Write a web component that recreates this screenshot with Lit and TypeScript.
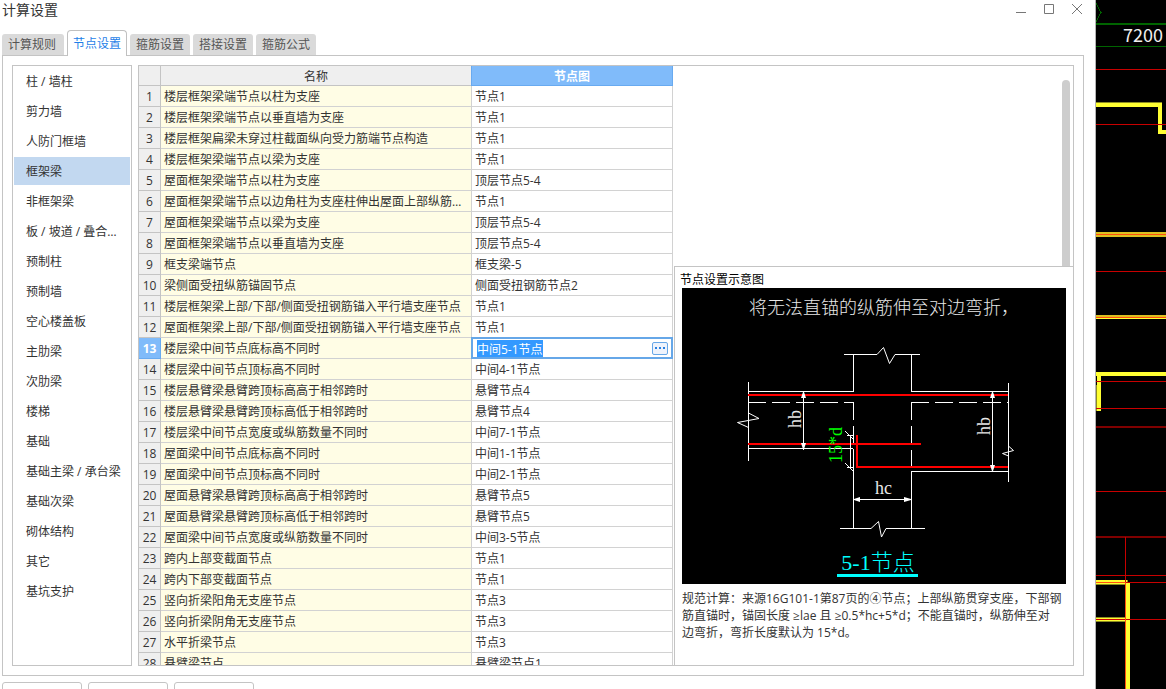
import { LitElement, html, css, svg } from "lit";
import { customElement, state, query } from "lit/decorators.js";
import { classMap } from "lit/directives/class-map.js";

const TABS = ["计算规则", "节点设置", "箍筋设置", "搭接设置", "箍筋公式"];

const CATEGORIES = [
  "柱 / 墙柱", "剪力墙", "人防门框墙", "框架梁", "非框架梁", "板 / 坡道 / 叠合楼板",
  "预制柱", "预制墙", "空心楼盖板", "主肋梁", "次肋梁", "楼梯", "基础",
  "基础主梁 / 承台梁", "基础次梁", "砌体结构", "其它", "基坑支护",
];

const ROWS: [string, string][] = [
  ["楼层框架梁端节点以柱为支座", "节点1"],
  ["楼层框架梁端节点以垂直墙为支座", "节点1"],
  ["楼层框架扁梁未穿过柱截面纵向受力筋端节点构造", "节点1"],
  ["楼层框架梁端节点以梁为支座", "节点1"],
  ["屋面框架梁端节点以柱为支座", "顶层节点5-4"],
  ["屋面框架梁端节点以边角柱为支座柱伸出屋面上部纵筋构造", "节点1"],
  ["屋面框架梁端节点以梁为支座", "顶层节点5-4"],
  ["屋面框架梁端节点以垂直墙为支座", "顶层节点5-4"],
  ["框支梁端节点", "框支梁-5"],
  ["梁侧面受扭纵筋锚固节点", "侧面受扭钢筋节点2"],
  ["楼层框架梁上部/下部/侧面受扭钢筋锚入平行墙支座节点", "节点1"],
  ["屋面框架梁上部/下部/侧面受扭钢筋锚入平行墙支座节点", "节点1"],
  ["楼层梁中间节点底标高不同时", "中间5-1节点"],
  ["楼层梁中间节点顶标高不同时", "中间4-1节点"],
  ["楼层悬臂梁悬臂跨顶标高高于相邻跨时", "悬臂节点4"],
  ["楼层悬臂梁悬臂跨顶标高低于相邻跨时", "悬臂节点4"],
  ["楼层梁中间节点宽度或纵筋数量不同时", "中间7-1节点"],
  ["屋面梁中间节点底标高不同时", "中间1-1节点"],
  ["屋面梁中间节点顶标高不同时", "中间2-1节点"],
  ["屋面悬臂梁悬臂跨顶标高高于相邻跨时", "悬臂节点5"],
  ["屋面悬臂梁悬臂跨顶标高低于相邻跨时", "悬臂节点5"],
  ["屋面梁中间节点宽度或纵筋数量不同时", "中间3-5节点"],
  ["跨内上部变截面节点", "节点1"],
  ["跨内下部变截面节点", "节点1"],
  ["竖向折梁阳角无支座节点", "节点3"],
  ["竖向折梁阴角无支座节点", "节点3"],
  ["水平折梁节点", "节点3"],
  ["悬臂梁节点", "悬臂梁节点1"],
];

/** Section drawing of the selected joint. */
@customElement("joint-diagram")
export class JointDiagram extends LitElement {
  static styles = css`
    :host { display: block; }
    svg { display: block; width: 100%; height: auto; background: #000; }
    .line { fill: none; stroke: #fff; stroke-width: 1; shape-rendering: crispEdges; }
    .zig { fill: none; stroke: #fff; stroke-width: 1; }
    .dash { stroke-dasharray: 18 6; }
    .bar { fill: none; stroke: #f00; stroke-width: 2; shape-rendering: crispEdges; }
    .mark { fill: #fff; }
    .rule { fill: #0ff; }
    text { font-family: "Liberation Serif", "Noto Sans CJK SC", serif; font-size: 18px; font-weight: 300; fill: #e8e8e8; }
    .green { fill: #0f0; }
    .cyan { fill: #0ff; font-size: 22px; text-anchor: middle; }
  `;
  render() {
    return html`
      <svg viewBox="0 0 384 296" role="img" aria-label="5-1节点">
        <text x="67" y="26">将无法直锚的纵筋伸至对边弯折，</text>
        <path class="line" d="M162 66.5H195M213 66.5H238M158 240.5H189M204 240.5H243" />
        <path class="zig" d="M195 66.5L201.5 59.5L207.5 75.5L213 66.5M189 240.5L196.5 233.5L199.5 249L204 240.5M66.5 125L77 130.5L55.5 134.5L66.5 139.5M327 158.5L331.5 162.5L320.5 165.5L326.5 168" />
        <path class="line" d="M171.5 66.5V103.5H66M171.5 160.5V240.5M66 160.5H171M66.5 94V173" />
        <path class="line" d="M229.5 66.5V103.5H326M229.5 240.5V183.5H326M326.5 95V194" />
        <path class="line dash" d="M66 114.5H171.5M171.5 114V156M229 114.5H326M229.5 114V178" />
        <path class="bar" d="M66 107H326M66 156H239M175 147V179H326" />
        <path class="line" d="M121.5 104V162M310.5 104V183M171 211.5H229M168.5 147V179M165 147.5H171M165 179.5H171" />
        <path class="zig" d="M163 143L171 151M163 175L171 183" />
        <path class="mark" d="M121 104H122L124 110H119ZM119 155H124L122 161H121ZM310 104H311L313 110H308ZM308 177H313L311 183H310ZM172 211L178 209V214L172 212ZM229 211L222 209V214L229 212Z" />
        <text x="193" y="206">hc</text>
        <text transform="translate(119 140) rotate(-90)">hb</text>
        <text transform="translate(308 147) rotate(-90)">hb</text>
        <text class="green" transform="translate(160 175) rotate(-90)">15*d</text>
        <text class="cyan" x="196" y="282">5-1节点</text>
        <rect class="rule" x="155" y="286" width="81" height="3" />
      </svg>`;
  }
}

/** Strip of the drawing canvas that shows beside the dialog. */
@customElement("plan-canvas")
export class PlanCanvas extends LitElement {
  static styles = css`
    :host { display: block; background: #000; overflow: hidden; }
    svg { display: block; width: 100%; height: 100%; }
    path { fill: none; shape-rendering: crispEdges; }
    .green { stroke: #006400; stroke-width: 1; }
    .red { stroke: #c80000; stroke-width: 1; }
    .dim { stroke: #800000; stroke-width: 2; }
    .wall { stroke: #ffff32; stroke-width: 4; }
    .wall-thin { stroke: #ffff32; stroke-width: 1; }
    .edge { stroke: #8c8c20; stroke-width: 5; }
    .edge-thin { stroke: #8c8c20; stroke-width: 1; }
    .gold { stroke: #dcc020; stroke-width: 2; }
    .orange { stroke: #ff5010; stroke-width: 1; }
    text { font: 18px "Noto Sans CJK SC", sans-serif; fill: #f0f0f0; }
  `;
  render() {
    const reds = [69, 124, 271, 381, 408, 491, 575];
    return html`
      <svg viewBox="0 0 70 689" preserveAspectRatio="xMinYMin slice" aria-hidden="true">
        <path class="green" d="M0 3.5L5 12.5L0 21.5M0 23.5H70M0 24.5H70M0 46.5H70" />
        <path class="edge" d="M0 104.5H66M0 234.5H70M0 582.5H32M0 619.5H29" />
        <path class="wall" d="M0 104.5H64V132H70M0 374H70M3 374V411M0 582H31M32 582V689" />
        <path class="gold" d="M0 233H70M0 236H70M0 316H70" />
        <path class="edge-thin" d="M0.5 385V411" />
        <path class="wall-thin" d="M0 318.5H70M0 618.5H29M0 620.5H29" />
        ${reds.map((y) => svg`<path class="red" d=${`M0 ${y}.5H70`} />`)}
        <path class="dim" d="M0 427H70M0 537H70" />
        <path class="red" d="M0 582.5H70M0 619.5H70M29.5 537V689" />
        <path class="orange" d="M0 234.5H70M0 317.5H70M0 582.5H30M29.5 582V689" />
        <text x="27" y="42">7200</text>
      </svg>`;
  }
}

@customElement("app-root")
export class AppRoot extends LitElement {
  @state() private tab = 1;
  @state() private category = 3;
  @state() private row = 12;
  @query(".editor") private editor!: HTMLInputElement;

  static styles = css`
    :host {
      display: grid;
      grid-template-columns: minmax(0, 1fr) 70px;
      height: 100vh;
      overflow: hidden;
      background: #fff;
      color: #333;
      font: 12px/16px "Open Sans", "Noto Sans CJK SC", sans-serif;
    }
    * { box-sizing: border-box; }
    button { font: inherit; color: inherit; border: 0; background: none; padding: 0; }
    .dialog { display: flex; flex-direction: column; min-width: 0; height: 100vh; padding-left: 2px; border-right: 1px solid #b4b4b4; overflow: hidden; }
    .title-bar { display: flex; justify-content: space-between; height: 30px; flex: none; }
    .title { margin: 0; font-size: 14px; line-height: 20px; font-weight: 400; }
    .controls { display: flex; gap: 12px; padding: 1px 10px 0 0; }
    .control { display: block; width: 16px; height: 16px; }
    .control svg { display: block; fill: none; stroke: #777; }
    .tabs { display: flex; align-items: flex-end; gap: 3px; height: 26px; flex: none; margin-bottom: -1px; position: relative; }
    .tab { height: 21px; margin-bottom: 1px; padding: 0 6px; background: #dadada; color: #555; border-radius: 3px 3px 0 0; line-height: 22px; min-width: 60px; }
    .tab:first-child { padding-right: 8px; }
    .tab.active { height: 26px; margin-bottom: 0; padding: 0 5px; background: #fff; color: #1f7fe8; border: 1px solid #c0c0c0; border-bottom: 0; border-radius: 4px 4px 0 0; line-height: 25px; }
    .page { display: flex; gap: 6px; flex: 1; min-height: 0; margin-right: 11px; padding: 9px; border: 1px solid #c4c4c4; }
    .categories { flex: none; width: 120px; margin: 0; padding: 1px; border: 1px solid #c4c4c4; display: flex; flex-direction: column; gap: 2px; overflow: hidden; }
    .category { flex: none; height: 28px; padding: 2px 4px 0 12px; text-align: left; overflow: hidden; text-overflow: ellipsis; white-space: nowrap; line-height: 26px; }
    .category.active { background: #c2d8f0; }
    .workspace { display: flex; flex: 1; min-width: 0; border: 1px solid #c4c4c4; }
    .grid { flex: none; width: 535px; overflow: hidden; }
    table { width: 534px; table-layout: fixed; border-collapse: separate; border-spacing: 0; }
    .col-index { width: 22px; }
    .col-value { width: 201px; }
    th, td { height: 21px; padding: 2px 3px 0; line-height: 18px; font-weight: 400; text-align: left; white-space: nowrap; overflow: hidden; text-overflow: ellipsis; border-right: 1px solid #d2d2d2; border-bottom: 1px solid #d2d2d2; }
    thead th { height: 20px; line-height: 17px; text-align: center; background: #efefef; border-color: #c4c4c4; }
    thead .current { background: #80bbfa; color: #fff; font-weight: 700; border-color: #68aaf0; box-shadow: -1px 0 #68aaf0; overflow: visible; }
    .index { padding: 2px 0 0; text-align: center; background: #efefef; border-color: #c4c4c4; }
    .name { background: #fffde5; }
    .index.current { background: #80bbfa; color: #fff; font-weight: 700; border-color: #68aaf0; }
    .value.current { padding: 0; overflow: visible; border: 0; }
    .edit-box { display: flex; align-items: center; height: 22px; margin: -1px 0 0 -1px; padding: 0 3px 0 4px; border: 2px solid #66a7e8; background: #fff; }
    .editor { flex: 1; min-width: 0; height: 18px; padding: 1px 0 0; border: 0; outline: 0; font: inherit; line-height: 17px; color: #333; background: none; }
    .editor::selection { background: #3399ff; color: #fff; }
    .more { flex: none; display: flex; align-items: center; justify-content: center; width: 16px; height: 13px; border: 1px solid #66a7e8; border-radius: 2px; background: #eef3fc; }
    .more svg { display: block; fill: #2a80e0; }
    .side { display: flex; flex-direction: column; flex: 1; min-width: 0; }
    .scroll-area { flex: 0 0 200px; display: flex; justify-content: flex-end; padding: 14px 3px 0 0; }
    .thumb { width: 8px; background: #cdcdcd; border-radius: 4px 4px 0 0; }
    .preview { flex: 1; min-height: 0; padding: 5px 7px 0; border: solid #c4c4c4; border-width: 1px 0 0 1px; overflow: hidden; }
    .preview-title { margin: 0 0 0 -2px; font-size: 12px; line-height: 16px; font-weight: 400; color: #000; }
    .note { margin: 6px 0 0; line-height: 17px; }
    .footer { display: flex; flex: none; gap: 6px; height: 13px; padding-top: 6px; }
    .action { width: 80px; height: 24px; border: 1px solid #c4c4c4; border-radius: 3px; }
  `;

  firstUpdated() {
    this.editor?.focus();
    this.editor?.select();
  }

  private renderValue(value: string, i: number) {
    if (i !== this.row) {
      return html`<td class="value" @click=${() => (this.row = i)}>${value}</td>`;
    }
    return html`<td class="value current">
      <div class="edit-box">
        <input class="editor" aria-label="节点图" .value=${value} />
        <button class="more" aria-label="选择节点">
          <svg width="10" height="2" viewBox="0 0 10 2"><path d="M0 0h2v2H0zM4 0h2v2H4zM8 0h2v2H8z" /></svg>
        </button>
      </div>
    </td>`;
  }

  render() {
    return html`
      <section class="dialog" role="dialog" aria-labelledby="title">
        <header class="title-bar">
          <h1 class="title" id="title">计算设置</h1>
          <div class="controls">
            <button class="control" aria-label="最小化"><svg width="16" height="16"><path d="M3 11.5H13" /></svg></button>
            <button class="control" aria-label="最大化"><svg width="16" height="16"><path d="M3.5 3.5H12.5V12.5H3.5Z" /></svg></button>
            <button class="control" aria-label="关闭"><svg width="16" height="16"><path d="M3 3L13 13M13 3L3 13" /></svg></button>
          </div>
        </header>
        <div class="tabs" role="tablist">
          ${TABS.map((t, i) => html`<button role="tab" aria-selected=${i === this.tab}
            class=${classMap({ tab: true, active: i === this.tab })} @click=${() => (this.tab = i)}>${t}</button>`)}
        </div>
        <main class="page">
          <nav class="categories">
            ${CATEGORIES.map((c, i) => html`<button
              class=${classMap({ category: true, active: i === this.category })}
              @click=${() => (this.category = i)}>${c}</button>`)}
          </nav>
          <div class="workspace">
            <div class="grid">
              <table>
                <colgroup><col class="col-index" /><col /><col class="col-value" /></colgroup>
                <thead><tr><th></th><th scope="col">名称</th><th scope="col" class="current">节点图</th></tr></thead>
                <tbody>
                  ${ROWS.map(([name, value], i) => html`<tr>
                    <th scope="row" class=${classMap({ index: true, current: i === this.row })}>${i + 1}</th>
                    <td class="name">${name}</td>
                    ${this.renderValue(value, i)}
                  </tr>`)}
                </tbody>
              </table>
            </div>
            <div class="side">
              <div class="scroll-area"><div class="thumb"></div></div>
              <section class="preview">
                <h2 class="preview-title">节点设置示意图</h2>
                <joint-diagram></joint-diagram>
                <p class="note">规范计算：来源16G101-1第87页的④节点；上部纵筋贯穿支座，下部钢筋直锚时，锚固长度 ≥lae 且 ≥0.5*hc+5*d；不能直锚时，纵筋伸至对<br />边弯折，弯折长度默认为 15*d。</p>
              </section>
            </div>
          </div>
        </main>
        <footer class="footer">
          <button class="action" aria-label="导入"></button>
          <button class="action" aria-label="导出"></button>
          <button class="action" aria-label="恢复"></button>
        </footer>
      </section>
      <plan-canvas></plan-canvas>
    `;
  }
}
